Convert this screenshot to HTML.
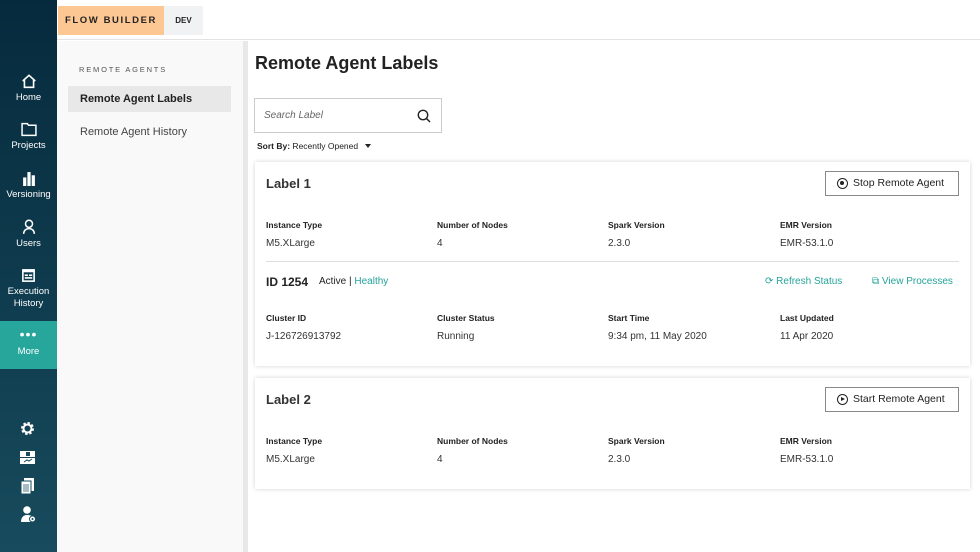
<!DOCTYPE html><html><head><style>
*{margin:0;padding:0;box-sizing:border-box}
body{width:980px;height:552px;overflow:hidden;font-family:"Liberation Sans",sans-serif;background:#fff;position:relative;color:#222}
.side{position:absolute;left:0;top:0;width:57px;height:552px;background:linear-gradient(#062a3d,#174b5d);color:#fff}
.nav{position:absolute;left:0;width:57px;text-align:center;font-size:9.5px;line-height:12px}
.nav svg{display:block;margin:0 auto 3px}
.more{position:absolute;left:0;top:321px;width:57px;height:48px;background:#27a69b;text-align:center;font-size:9.5px}
.top{position:absolute;left:57px;top:0;right:0;height:40px;border-bottom:1px solid #e3e3e3;background:#fff}
.fb{position:absolute;left:58px;top:6px;width:106px;height:29px;background:#fdc793;font-size:9.5px;font-weight:bold;letter-spacing:1.6px;line-height:29px;text-align:center;color:#222}
.dev{position:absolute;left:164px;top:6px;width:39px;height:29px;background:#f1f2f3;font-size:8px;font-weight:bold;line-height:29px;text-align:center}
.panel{position:absolute;left:57px;top:41px;width:186px;height:511px;background:#f9f9f9}
.scr{position:absolute;left:243px;top:41px;width:5px;height:511px;background:#e8e8e8}
.card{position:absolute;left:255px;width:715px;background:#fff;box-shadow:0 0 4px rgba(0,0,0,.18);}
.lbl{position:absolute;font-size:8.5px;font-weight:bold}
.val{position:absolute;font-size:10px;color:#333}
.btn{position:absolute;right:11px;width:134px;height:25px;border:1px solid #888;font-size:10.5px;line-height:23px;padding-left:27px;color:#222}
.btn i{position:absolute;left:11px;top:6px;width:11px;height:11px;border:1.3px solid #222;border-radius:50%}
.teal{color:#26a39b}
</style></head><body>
<div class="side">
 <div class="nav" style="top:73px"><svg width="16" height="16" viewBox="0 0 14 14"><path d="M1.5 7L7 2l5.5 5M3 6v6.5h8V6" fill="none" stroke="#fff" stroke-width="1.4"/></svg>Home</div>
 <div class="nav" style="top:122px"><svg width="16" height="15" viewBox="0 0 15 13"><path d="M1 1h5l1 1.5h7V12H1z" fill="none" stroke="#fff" stroke-width="1.4"/></svg>Projects</div>
 <div class="nav" style="top:171px"><svg width="14" height="15" viewBox="0 0 13 14"><rect x="1" y="6" width="3" height="8" fill="#fff"/><rect x="5" y="1" width="3" height="13" fill="#fff"/><rect x="9" y="4" width="3" height="10" fill="#fff"/></svg>Versioning</div>
 <div class="nav" style="top:219px"><svg width="14" height="16" viewBox="0 0 13 15"><circle cx="6.5" cy="4.5" r="3.3" fill="none" stroke="#fff" stroke-width="1.4"/><path d="M1.5 14c0-3 2-5 5-5s5 2 5 5" fill="none" stroke="#fff" stroke-width="1.4"/></svg>Users</div>
 <div class="nav" style="top:268px"><svg width="15" height="15" viewBox="0 0 14 14"><rect x="1" y="1" width="12" height="12" fill="#fff"/><rect x="2.5" y="4" width="9" height="7.5" fill="#0f3b4f"/><rect x="3.5" y="6" width="3" height="1.5" fill="#fff"/><rect x="3.5" y="8.5" width="7" height="1.5" fill="#fff"/><rect x="7.5" y="6" width="3" height="1.5" fill="#fff"/></svg>Execution<br>History</div>
 <div class="more"><div style="padding-top:8px;font-size:14px;line-height:10px;letter-spacing:1px">•••</div><div style="margin-top:7px">More</div></div>
 <svg style="position:absolute;left:20px;top:421px" width="15" height="15" viewBox="0 0 15 15"><circle cx="7.5" cy="7.5" r="5" fill="none" stroke="#fff" stroke-width="3" stroke-dasharray="2.2 1.7"/><circle cx="7.5" cy="7.5" r="4" fill="none" stroke="#fff" stroke-width="2"/></svg>
 <svg style="position:absolute;left:20px;top:450px" width="15" height="15" viewBox="0 0 15 15"><rect x="0" y="1" width="15" height="6" fill="#fff"/><rect x="0" y="8" width="15" height="6" fill="#fff"/><path d="M4 12l3-2 2 1 3-2" stroke="#174b5d" stroke-width="1" fill="none"/><rect x="6" y="2" width="4" height="4" fill="#174b5d"/></svg>
 <svg style="position:absolute;left:21px;top:478px" width="14" height="16" viewBox="0 0 14 16"><rect x="3" y="0" width="10" height="13" fill="#fff"/><rect x="0" y="3" width="10" height="13" fill="#fff" stroke="#174b5d" stroke-width="1"/><path d="M2 7h6M2 9h6M2 11h6M2 13h6" stroke="#174b5d" stroke-width="0.8"/></svg>
 <svg style="position:absolute;left:21px;top:506px" width="15" height="17" viewBox="0 0 15 17"><circle cx="6" cy="4" r="3.8" fill="#fff"/><path d="M0 16c0-4 2-7 6-7s5 1 6 3v4z" fill="#fff"/><circle cx="11.5" cy="13" r="3" fill="#fff" stroke="#174b5d"/><circle cx="11.5" cy="13" r="1" fill="#174b5d"/></svg>
</div>
<div class="top"></div>
<div class="fb">FLOW BUILDER</div><div class="dev">DEV</div>
<div class="panel">
 <div style="position:absolute;left:22px;top:24px;font-size:7.5px;letter-spacing:1.8px;color:#555">REMOTE AGENTS</div>
 <div style="position:absolute;left:11px;top:45px;width:163px;height:26px;background:#e8e8e8;font-size:11px;font-weight:bold;line-height:27px;padding-left:12px">Remote Agent Labels</div>
 <div style="position:absolute;left:23px;top:85px;font-size:11px;color:#444">Remote Agent History</div>
</div>
<div class="scr"></div>
<div style="position:absolute;left:255px;top:53px;font-size:18px;font-weight:bold">Remote Agent Labels</div>
<div style="position:absolute;left:254px;top:98px;width:188px;height:35px;border:1px solid #ccc;font-size:10px;font-style:italic;color:#666;line-height:33px;padding-left:9px">Search Label
<svg style="position:absolute;right:10px;top:10px" width="14" height="14" viewBox="0 0 14 14"><circle cx="6" cy="6" r="4.7" fill="none" stroke="#222" stroke-width="1.4"/><path d="M9.5 9.5L13 13" stroke="#222" stroke-width="1.5"/></svg></div>
<div style="position:absolute;left:257px;top:141px;font-size:8.5px"><b>Sort By:</b> Recently Opened <span style="display:inline-block;margin-left:5px;border:3.5px solid transparent;border-top:4px solid #222;vertical-align:-2px"></span></div>

<div class="card" style="top:162px;height:204px">
 <div style="position:absolute;left:11px;top:14px;font-size:13px;font-weight:bold;color:#333">Label 1</div>
 <div class="btn" style="top:9px"><i><span style="position:absolute;left:2.3px;top:2.3px;width:4px;height:4px;background:#222;border-radius:50%"></span></i>Stop Remote Agent</div>
 <div class="lbl" style="left:11px;top:58px">Instance Type</div><div class="val" style="left:11px;top:76px">M5.XLarge</div>
 <div class="lbl" style="left:182px;top:58px">Number of Nodes</div><div class="val" style="left:182px;top:76px">4</div>
 <div class="lbl" style="left:353px;top:58px">Spark Version</div><div class="val" style="left:353px;top:76px">2.3.0</div>
 <div class="lbl" style="left:525px;top:58px">EMR Version</div><div class="val" style="left:525px;top:76px">EMR-53.1.0</div>
 <div style="position:absolute;left:11px;right:11px;top:99px;border-top:1px solid #ddd"></div>
 <div style="position:absolute;left:11px;top:113px;font-size:12px;font-weight:bold">ID 1254</div>
 <div style="position:absolute;left:64px;top:114px;font-size:10px">Active | <span class="teal">Healthy</span></div>
 <div class="teal" style="position:absolute;left:510px;top:114px;font-size:10px">⟳ Refresh Status</div>
 <div class="teal" style="position:absolute;left:617px;top:114px;font-size:10px">⧉ View Processes</div>
 <div class="lbl" style="left:11px;top:151px">Cluster ID</div><div class="val" style="left:11px;top:169px">J-126726913792</div>
 <div class="lbl" style="left:182px;top:151px">Cluster Status</div><div class="val" style="left:182px;top:169px">Running</div>
 <div class="lbl" style="left:353px;top:151px">Start Time</div><div class="val" style="left:353px;top:169px">9:34 pm, 11 May 2020</div>
 <div class="lbl" style="left:525px;top:151px">Last Updated</div><div class="val" style="left:525px;top:169px">11 Apr 2020</div>
</div>
<div class="card" style="top:378px;height:111px">
 <div style="position:absolute;left:11px;top:14px;font-size:13px;font-weight:bold;color:#333">Label 2</div>
 <div class="btn" style="top:9px"><i><span style="position:absolute;left:3px;top:1.8px;border:2.5px solid transparent;border-left:4px solid #222;border-right:0"></span></i>Start Remote Agent</div>
 <div class="lbl" style="left:11px;top:58px">Instance Type</div><div class="val" style="left:11px;top:76px">M5.XLarge</div>
 <div class="lbl" style="left:182px;top:58px">Number of Nodes</div><div class="val" style="left:182px;top:76px">4</div>
 <div class="lbl" style="left:353px;top:58px">Spark Version</div><div class="val" style="left:353px;top:76px">2.3.0</div>
 <div class="lbl" style="left:525px;top:58px">EMR Version</div><div class="val" style="left:525px;top:76px">EMR-53.1.0</div>
</div>
</body></html>
